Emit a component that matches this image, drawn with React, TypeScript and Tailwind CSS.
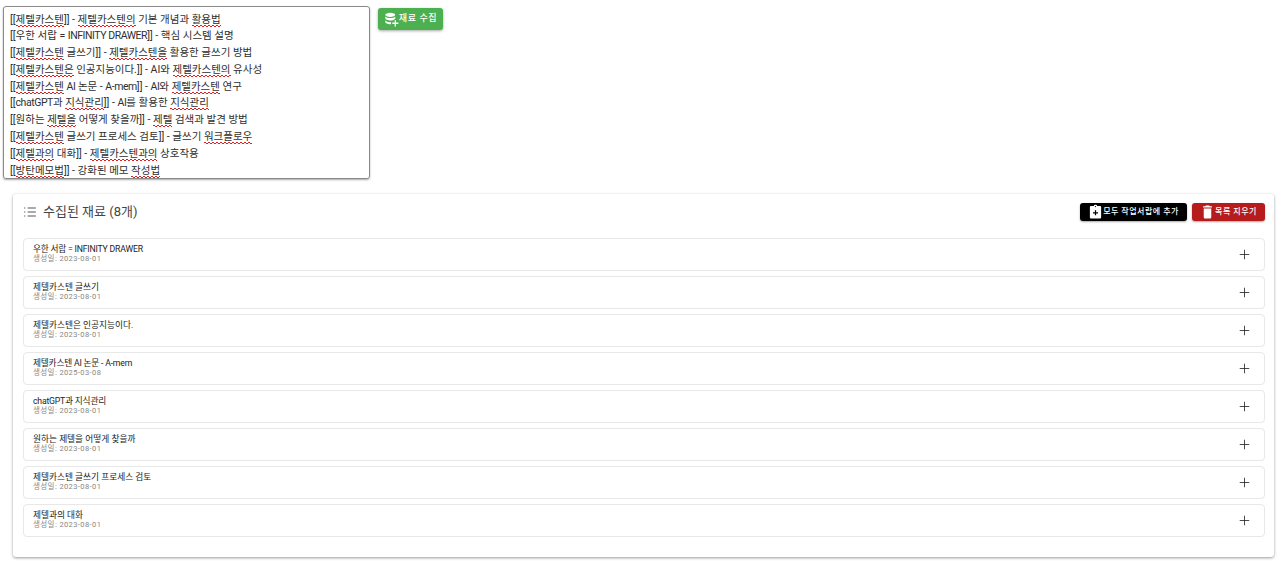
import { Plus } from "lucide-react";
import type { ReactNode } from "react";

const font = "font-['Roboto','Noto_Sans_CJK_KR',sans-serif]";

// red squiggle, same as the browser's spellcheck mark
function Sq({ children }: { children: ReactNode }) {
  return (
    <span className="bg-[linear-gradient(45deg,transparent_35%,#e02020_35%,#e02020_65%,transparent_65%),linear-gradient(135deg,transparent_35%,#e02020_35%,#e02020_65%,transparent_65%)] bg-size-[4px_2px] bg-position-[0_100%,2px_100%] bg-repeat-x pb-[1px]">
      {children}
    </span>
  );
}

// latin runs sit tighter than the korean around them
function Lt({ children }: { children: ReactNode }) {
  return <span className="tracking-[-0.45px]">{children}</span>;
}

const lines: ReactNode[] = [
  <>[[<Sq>제텔카스텐</Sq>]] - <Sq>제텔카스텐의</Sq> 기본 개념과 <Sq>활용법</Sq></>,
  <>[[우한 서랍 = <Lt>INFINITY DRAWER</Lt>]] - 핵심 시스템 설명</>,
  <>[[<Sq>제텔카스텐</Sq> 글쓰기]] - <Sq>제텔카스텐을</Sq> 활용한 글쓰기 방법</>,
  <>[[<Sq>제텔카스텐은</Sq> 인공지능이다.]] - AI와 <Sq>제텔카스텐의</Sq> 유사성</>,
  <>[[<Sq>제텔카스텐</Sq> <Lt>AI</Lt> 논문 - <Lt>A-mem</Lt>]] - <Lt>AI</Lt>와 <Sq>제텔카스텐</Sq> 연구</>,
  <>[[<Lt>chatGPT</Lt>과 <Sq>지식관리</Sq>]] - <Lt>AI</Lt>를 활용한 <Sq>지식관리</Sq></>,
  <>[[원하는 <Sq>제텔을</Sq> 어떻게 찾을까]] - <Sq>제텔</Sq> 검색과 발견 방법</>,
  <>[[<Sq>제텔카스텐</Sq> 글쓰기 프로세스 검토]] - 글쓰기 <Sq>워크플로우</Sq></>,
  <>[[<Sq>제텔과의</Sq> 대화]] - <Sq>제텔카스텐과의</Sq> 상호작용</>,
  <>[[<Sq>방탄메모법</Sq>]] - 강화된 메모 <Sq>작성법</Sq></>,
];

const items = [
  { title: "우한 서랍 = INFINITY DRAWER", date: "2023-08-01", tight: true },
  { title: "제텔카스텐 글쓰기", date: "2023-08-01" },
  { title: "제텔카스텐은 인공지능이다.", date: "2023-08-01" },
  { title: "제텔카스텐 AI 논문 - A-mem", date: "2025-03-08", tight: true },
  { title: "chatGPT과 지식관리", date: "2023-08-01", tight: true },
  { title: "원하는 제텔을 어떻게 찾을까", date: "2023-08-01" },
  { title: "제텔카스텐 글쓰기 프로세스 검토", date: "2023-08-01" },
  { title: "제텔과의 대화", date: "2023-08-01" },
];

function DbPlusIcon() {
  return (
    <svg width="15" height="15" viewBox="0 0 24 24" fill="currentColor">
      <path d="M10 1C5.6 1 2 2.6 2 4.5S5.6 8 10 8s8-1.6 8-3.5S14.400 1 10 1z" />
      <path d="M2 7v3c0 1.900 3.600 3.500 8 3.500 3.100 0 5.800-.8 7.100-2 .3-.3.900-.5.900-.5V7c-1.500 1.600-4.700 2.600-8 2.600S3.500 8.600 2 7z" />
      <path d="M2 13v3c0 1.900 3.600 3.500 8 3.500h1.500c-.3-1-.4-2-.3-3.400-.4 0-.8.100-1.200.100-3.300 0-6.500-1-8-3.200z" />
      <path d="M17 13h2.200v3.800H23V19h-3.800v4H17v-4h-3.800v-2.200H17z" />
    </svg>
  );
}

function ClipboardPlusIcon() {
  return (
    <svg width="15" height="15" viewBox="0 0 24 24" fill="currentColor">
      <path d="M19 3h-4.200C14.400 1.800 13.300 1 12 1s-2.400.8-2.800 2H5c-1.100 0-2 .9-2 2v16c0 1.100.9 2 2 2h14c1.100 0 2-.9 2-2V5c0-1.100-.9-2-2-2zm-7 0c.6 0 1 .4 1 1s-.4 1-1 1-1-.4-1-1 .4-1 1-1zm4 12h-3v3h-2v-3H8v-2h3v-3h2v3h3v2z" />
    </svg>
  );
}

function TrashIcon() {
  return (
    <svg width="15" height="15" viewBox="0 0 24 24" fill="currentColor">
      <path d="M6 21c0 1.100.9 2 2 2h8c1.100 0 2-.9 2-2V7H6v14zM19 3.500h-3.500l-1-1h-5l-1 1H5v2h14v-2z" />
    </svg>
  );
}

function ListIcon() {
  return (
    <svg width="14" height="14" viewBox="0 0 24 24" fill="none" stroke="#555" strokeWidth="1.800">
      <path d="M8 5h14M8 12h14M8 19h14" />
      <path d="M2 5h2M2 12h2M2 19h2" />
    </svg>
  );
}

export default function App() {
  return (
    <div className={`${font} min-h-[565px] bg-white text-[#333] relative`}>
      <div className="flex items-start pl-[3px] pt-[6px]">
        <div className="w-[367px] h-[173px] overflow-hidden rounded-[3px] border border-[#8a8a8a] shadow-[0_1px_2px_rgba(0,0,0,0.35)] pl-[6px] pt-[4.500px] text-[10.500px] leading-[16.800px] text-[#2f2f2f]">
          {lines.map((line, i) => (
            <div key={i} className="whitespace-nowrap">{line}</div>
          ))}
        </div>
        <button className="ml-[8px] mt-[2px] flex h-[22px] w-[65px] items-center justify-center rounded-[3px] bg-[#4caf50] text-[9px] font-medium tracking-[0.6px] text-white shadow-[0_1px_3px_rgba(0,0,0,0.35)]">
          <DbPlusIcon />
          재료 수집
        </button>
      </div>

      <div className="ml-[13px] mr-[6px] mt-[15px] h-[363px] rounded-[3px] bg-white pl-[10px] pr-[9px] shadow-[0_1px_3px_rgba(0,0,0,0.4)]">
        <div className="flex h-[44px] items-center justify-between pb-[9px]">
          <div className="flex items-center">
            <ListIcon />
            <span className="ml-[6px] mt-[1px] text-[13px] text-[#444]">수집된 재료 (8개)</span>
          </div>
          <div className="flex items-center gap-[5px]">
            <button className="flex h-[18px] w-[107px] items-center justify-center rounded-[3px] bg-black text-[8px] font-medium tracking-[0.5px] text-white shadow-[0_1px_2px_rgba(0,0,0,0.35)]">
              <ClipboardPlusIcon />
              모두 작업서랍에 추가
            </button>
            <button className="flex h-[18px] w-[73px] items-center justify-center rounded-[3px] bg-[#b71c1c] text-[8px] font-medium tracking-[0.5px] text-white shadow-[0_1px_2px_rgba(0,0,0,0.35)]">
              <TrashIcon />
              목록 지우기
            </button>
          </div>
        </div>
        <div className="flex flex-col gap-[5px]">
          {items.map((item) => (
            <div
              key={item.title}
              className="flex h-[33px] items-center justify-between rounded-[4px] border border-[#e8e8e8] pl-[9px] pr-[12px]"
            >
              <div className="mb-[1px]">
                <div className={item.tight ? "text-[8.700px] leading-[10px] tracking-[-0.2px] text-[#222]" : "text-[8.700px] leading-[10px] text-[#222]"}>
                  {item.title}
                </div>
                <div className="text-[7.500px] leading-[10px] tracking-[0.4px] text-[#888]">생성일: {item.date}</div>
              </div>
              <Plus size={15} strokeWidth={1.3} color="#222" />
            </div>
          ))}
        </div>
      </div>
    </div>
  );
}
